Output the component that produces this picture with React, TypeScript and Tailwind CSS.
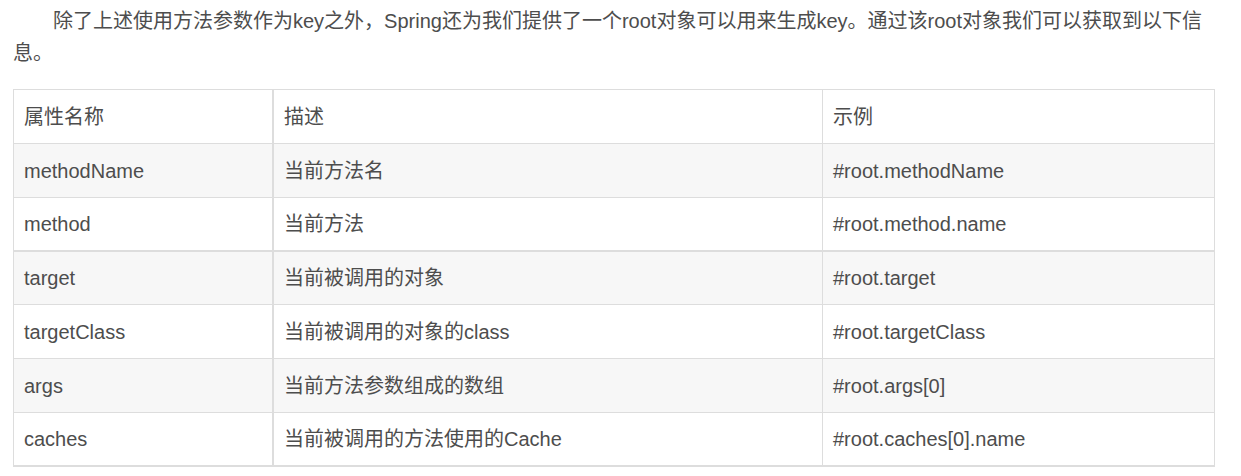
import React from "react";

const rows: { name: string; desc: string; example: string }[] = [
  { name: "methodName", desc: "当前方法名", example: "#root.methodName" },
  { name: "method", desc: "当前方法", example: "#root.method.name" },
  { name: "target", desc: "当前被调用的对象", example: "#root.target" },
  { name: "targetClass", desc: "当前被调用的对象的class", example: "#root.targetClass" },
  { name: "args", desc: "当前方法参数组成的数组", example: "#root.args[0]" },
  { name: "caches", desc: "当前被调用的方法使用的Cache", example: "#root.caches[0].name" },
];

function Row({
  cells,
  gray,
  className,
}: {
  cells: [string, string, string];
  gray?: boolean;
  className: string;
}) {
  return (
    <div className={`flex items-center border-[#dddddd] ${gray ? "bg-[#f7f7f7]" : "bg-white"} ${className}`}>
      <div className="flex h-full w-[260px] shrink-0 items-center border-r-2 border-[#dddddd] pl-[10px]">{cells[0]}</div>
      <div className="flex h-full w-[549px] shrink-0 items-center border-r border-[#dddddd] pl-[10px]">{cells[1]}</div>
      <div className="flex h-full flex-1 items-center pl-[10px]">{cells[2]}</div>
    </div>
  );
}

export default function App() {
  return (
    <div
      className="min-h-[476px] bg-white text-[20px] text-[#4d4d4d]"
      style={{ fontFamily: '"Liberation Sans", "Noto Sans CJK SC", sans-serif' }}
    >
      <p className="px-[13px] pt-[5px] indent-[40px] leading-[32px]">
        除了上述使用方法参数作为key之外，Spring还为我们提供了一个root对象可以用来生成key。通过该root对象我们可以获取到以下信
        <br />
        息。
      </p>
      <div className="ml-[13px] mt-[20px] w-[1202px] border-x border-t border-[#dddddd]">
        <Row cells={["属性名称", "描述", "示例"]} className="h-[54px] border-b" />
        {rows.map((r, i) => (
          <Row
            key={r.name}
            cells={[r.name, r.desc, r.example]}
            gray={i % 2 === 0}
            className={
              i === 1
                ? "h-[54px] border-b-2"
                : i === 2
                  ? "h-[53px] border-b"
                  : i === rows.length - 1
                    ? "h-[54px] border-b-2"
                    : "h-[54px] border-b"
            }
          />
        ))}
      </div>
    </div>
  );
}
